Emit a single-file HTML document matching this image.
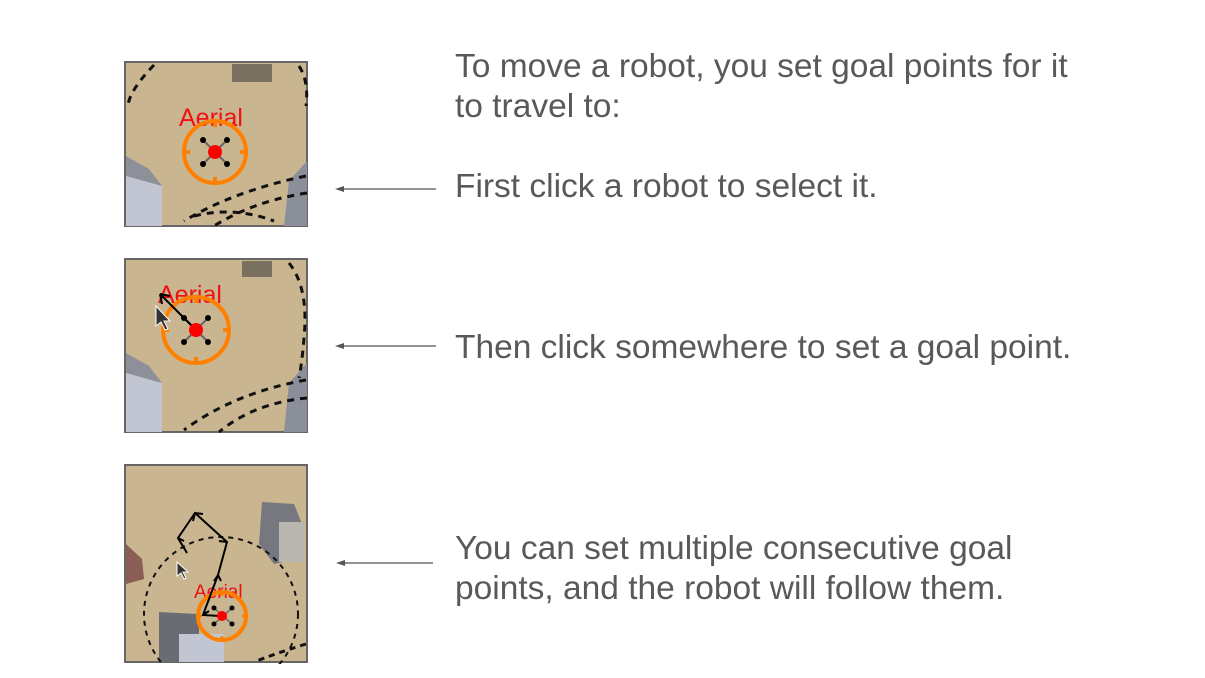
<!DOCTYPE html>
<html><head><meta charset="utf-8"><style>
body{margin:0;width:1205px;height:678px;background:#fff;position:relative;overflow:hidden;font-family:"Liberation Sans",sans-serif}
.t{position:absolute;left:455px;color:#595959;font-size:33.5px;line-height:40px;white-space:nowrap}
svg{position:absolute}
</style></head><body>

<svg style="left:124px;top:61px" width="185" height="167" viewBox="0 0 185 167">
<rect x="1" y="1" width="182" height="164" fill="#c9b58f" stroke="#666" stroke-width="2"/>
<polygon points="2,95 25,108 38,125 38,165 2,165" fill="#8d8f99"/>
<polygon points="2,115 38,125 38,165 2,165" fill="#c2c6d2"/>
<rect x="108" y="3" width="40" height="18" fill="#7a7060"/>
<polygon points="165,120 183,100 183,165 160,165" fill="#8b8f9a"/>
<path d="M30,4 Q5,30 4,45 M175,5 Q185,20 182,45 M182,115 Q110,130 60,160 M183,132 Q130,140 90,165 M70,155 Q110,145 150,160" fill="none" stroke="#111" stroke-width="3" stroke-dasharray="7,6"/>
<text x="55" y="65" fill="#f01010" font-size="25" font-family="Liberation Sans">Aerial</text>
<circle cx="91" cy="91" r="31" fill="none" stroke="#ff8000" stroke-width="4"/>
<path d="M91,58v8M91,116v8M58,91h8M116,91h8" stroke="#ff8000" stroke-width="4"/>
<path d="M79,79L103,103M103,79L79,103" stroke="#666" stroke-width="2"/>
<circle cx="79" cy="79" r="3" fill="#000"/><circle cx="103" cy="79" r="3" fill="#000"/><circle cx="79" cy="103" r="3" fill="#000"/><circle cx="103" cy="103" r="3" fill="#000"/>
<circle cx="91" cy="91" r="7" fill="#f00"/>
</svg>

<svg style="left:124px;top:258px" width="185" height="176" viewBox="0 0 185 176">
<rect x="1" y="1" width="182" height="173" fill="#c9b58f" stroke="#666" stroke-width="2"/>
<polygon points="2,95 25,108 38,125 38,174 2,174" fill="#8d8f99"/>
<polygon points="2,115 38,125 38,174 2,174" fill="#c2c6d2"/>
<rect x="118" y="3" width="30" height="16" fill="#7a7060"/>
<polygon points="165,125 183,105 183,174 160,174" fill="#8b8f9a"/>
<path d="M165,5 Q185,30 180,80 Q178,105 175,120 M182,122 Q110,135 60,172 M183,140 Q130,145 95,174" fill="none" stroke="#111" stroke-width="3" stroke-dasharray="7,6"/>
<text x="34" y="45" fill="#f01010" font-size="25" font-family="Liberation Sans">Aerial</text>
<circle cx="72" cy="72" r="33" fill="none" stroke="#ff8000" stroke-width="4"/>
<path d="M72,37v8M72,99v8M37,72h8M99,72h8" stroke="#ff8000" stroke-width="4"/>
<path d="M60,60L84,84M84,60L60,84" stroke="#666" stroke-width="2"/>
<circle cx="60" cy="60" r="3" fill="#000"/><circle cx="84" cy="60" r="3" fill="#000"/><circle cx="60" cy="84" r="3" fill="#000"/><circle cx="84" cy="84" r="3" fill="#000"/>
<path d="M72,72L36,36M36,36l10,2M36,36l2,10" stroke="#000" stroke-width="2" fill="none"/>
<circle cx="72" cy="72" r="7" fill="#f00"/>
<path d="M32,48v20l5,-4 4,8 3,-1 -4,-8 6,0z" fill="#333" stroke="#fff" stroke-width="1"/>
</svg>

<svg style="left:124px;top:464px" width="185" height="200" viewBox="0 0 185 200">
<rect x="1" y="1" width="182" height="197" fill="#c9b58f" stroke="#666" stroke-width="2"/>
<polygon points="138,38 170,40 178,60 172,95 150,100 135,80" fill="#76777f"/>
<rect x="155" y="58" width="25" height="40" fill="#b9b6b0"/>
<polygon points="2,80 18,95 20,115 2,120" fill="#8a5d55"/>
<polygon points="35,148 75,150 75,198 35,198" fill="#6a6c74"/>
<rect x="55" y="170" width="45" height="28" fill="#c2c6d2"/>
<circle cx="97" cy="150" r="77" fill="none" stroke="#111" stroke-width="2" stroke-dasharray="5,5"/>
<path d="M182,180 Q150,190 130,198" fill="none" stroke="#111" stroke-width="3" stroke-dasharray="6,5"/>
<text x="70" y="134" fill="#f01010" font-size="19" font-family="Liberation Sans">Aerial</text>
<circle cx="98" cy="152" r="24" fill="none" stroke="#ff8000" stroke-width="4"/>
<path d="M98,126v6M98,172v6M72,152h6M118,152h6" stroke="#ff8000" stroke-width="3"/>
<path d="M90,144L108,160M108,144L90,160" stroke="#666" stroke-width="1.5"/>
<circle cx="90" cy="144" r="2.5" fill="#000"/><circle cx="108" cy="144" r="2.5" fill="#000"/><circle cx="90" cy="160" r="2.5" fill="#000"/><circle cx="108" cy="160" r="2.5" fill="#000"/>
<path d="M96,152L79,151L94,111L103,78L71,49L54,74L63,89M79,151l6,-4M94,111l-4,6M94,111l3,6M103,78l-8,-1M71,49l8,1M71,49l-2,8M54,74l4,-6M54,74l6,3" stroke="#000" stroke-width="2" fill="none"/>
<circle cx="98" cy="152" r="5" fill="#f00"/>
<path d="M53,98v14l4,-3 3,6 2,-1 -3,-6 5,0z" fill="#333" stroke="#fff" stroke-width="1"/>
</svg>

<svg style="left:330px;top:180px" width="110" height="400" viewBox="330 180 110 400">
<g stroke="#555" stroke-width="1.2"><line x1="340" y1="189" x2="436" y2="189"/><line x1="340" y1="346" x2="436" y2="346"/><line x1="340" y1="563" x2="433" y2="563"/></g>
<g fill="#555"><path d="M335,189l9,-3v6z"/><path d="M335,346l9,-3v6z"/><path d="M336,563l9,-3v6z"/></g>
</svg>

<div class="t" style="top:47px">To move a robot, you set goal points for it<br>to travel to:</div>
<div class="t" style="top:167px">First click a robot to select it.</div>
<div class="t" style="top:328px">Then click somewhere to set a goal point.</div>
<div class="t" style="top:529px">You can set multiple consecutive goal<br>points, and the robot will follow them.</div>
</body></html>
